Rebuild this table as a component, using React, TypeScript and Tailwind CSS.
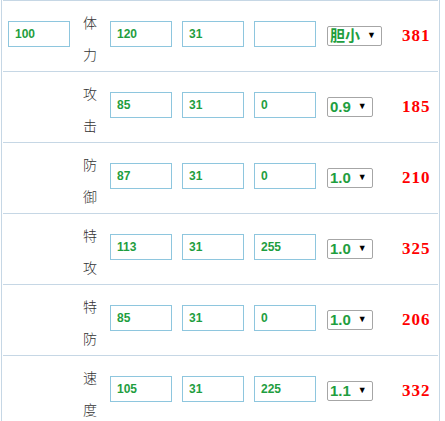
const rows = [
  { base: '100', name: ['体', '力'], stat: '120', iv: '31', ev: '', nature: '胆小', total: '381' },
  { base: '', name: ['攻', '击'], stat: '85', iv: '31', ev: '0', nature: '0.9', total: '185' },
  { base: '', name: ['防', '御'], stat: '87', iv: '31', ev: '0', nature: '1.0', total: '210' },
  { base: '', name: ['特', '攻'], stat: '113', iv: '31', ev: '255', nature: '1.0', total: '325' },
  { base: '', name: ['特', '防'], stat: '85', iv: '31', ev: '0', nature: '1.0', total: '206' },
  { base: '', name: ['速', '度'], stat: '105', iv: '31', ev: '225', nature: '1.1', total: '332' },
];

function Box({ value }: { value: string }) {
  return (
    <input
      readOnly
      value={value}
      className="w-[62px] h-[26px] mb-[5px] border border-[#8ec6de] bg-white pl-[6px] text-[12px] font-bold text-[#1f9e3f] outline-none"
      style={{ fontFamily: '"Liberation Sans", Arial, sans-serif' }}
    />
  );
}

export default function App() {
  return (
    <div className="w-[439px] ml-[1px] border-x border-[#c6d7e5] bg-white">
      {rows.map((r, i) => (
        <div
          key={i}
          className={`mx-[1px] h-[71px] flex items-center border-b border-[#c6d7e5] ${i === 0 ? 'border-t h-[72px]' : ''}`}
        >
          <div className="pl-[5px] w-[67px] flex">{r.base ? <Box value={r.base} /> : null}</div>
          <div
            className="w-[40px] flex flex-col items-center mt-[3px] text-[14px] font-light text-[#333]"
            style={{ fontFamily: '"Noto Sans CJK SC", sans-serif' }}
          >
            <span className="h-[32px] leading-[32px]">{r.name[0]}</span>
            <span className="h-[32px] leading-[32px]">{r.name[1]}</span>
          </div>
          <div className="flex gap-[10px]">
            <Box value={r.stat} />
            <Box value={r.iv} />
            <Box value={r.ev} />
          </div>
          <div className="w-[86px] pl-[11px] flex">
            <div
              className="h-[20px] flex items-center border border-[#a6a6a6] rounded-[2px] pl-[2px] pr-[5px] text-[15px] font-bold text-[#1f9e3f]"
              style={{ fontFamily: '"Liberation Sans", "Noto Sans CJK SC", sans-serif' }}
            >
              <span>{r.nature}</span>
              <span className="ml-[7px] text-[9px] text-black">▼</span>
            </div>
          </div>
          <div
            className="text-[17px] font-bold text-[#ff0000] tracking-[1px]"
            style={{ fontFamily: '"Liberation Serif", serif' }}
          >
            {r.total}
          </div>
        </div>
      ))}
    </div>
  );
}
